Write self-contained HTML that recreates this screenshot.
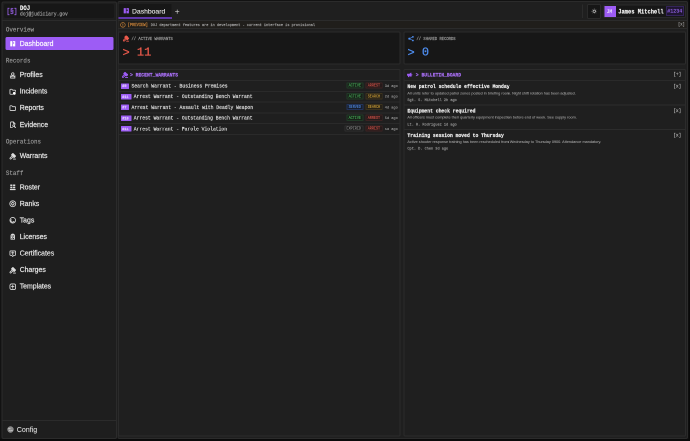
<!DOCTYPE html>
<html><head><meta charset="utf-8">
<style>
html,body{margin:0;padding:0;width:690px;height:441px;overflow:hidden;background:#0b0b0b;}
#r{will-change:transform;position:absolute;left:0;top:0;width:1380px;height:882px;transform:scale(.5);transform-origin:0 0;background:#121212;overflow:hidden;}
.t{position:absolute;white-space:nowrap;line-height:1;}
.box{position:absolute;box-sizing:border-box;}
svg{position:absolute;overflow:visible;}
</style></head><body><div id="r">
<div class="box" style="left:1377.00px;top:0.00px;width:3.00px;height:882.00px;background:#0a0a0a;border-radius:0.00px;"></div>
<div class="box" style="left:0.00px;top:878.40px;width:1380.00px;height:3.60px;background:#0a0a0a;border-radius:0.00px;"></div>
<div class="box" style="left:2.60px;top:2.60px;width:231.40px;height:875.20px;background:#1e1e1e;border:2px solid #2b2b2b;border-radius:4.00px;"></div>
<div class="box" style="left:8.00px;top:8.00px;width:220.40px;height:28.40px;background:#171717;border-radius:3.00px;"></div>
<div class="t" style="left:12.80px;top:17.61px;font-size:12.80px;font-family:'Liberation Mono',monospace;color:#a467f7;transform-origin:0 5.59px;transform:scaleY(1.1);letter-spacing:-0.5px;-webkit-text-stroke:0.4px currentColor;">[§]</div>
<div class="t" style="left:40.00px;top:12.31px;font-size:11.20px;font-family:'Liberation Mono',monospace;color:#f2f2f2;font-weight:bold;transform-origin:0 4.89px;transform:scaleY(1.1);-webkit-text-stroke:0.3px currentColor;">DOJ</div>
<div class="t" style="left:40.00px;top:24.09px;font-size:9.40px;font-family:'Liberation Mono',monospace;color:#9a9a9a;transform-origin:0 4.11px;transform:scaleY(1.1);-webkit-text-stroke:0.4px currentColor;">doj@judiciary.gov</div>
<div class="box" style="left:2.60px;top:40.00px;width:231.40px;height:2.00px;background:#2b2b2b;border-radius:0.00px;"></div>
<div class="t" style="left:11.80px;top:54.89px;font-size:11.70px;font-family:'Liberation Mono',monospace;color:#9a9a9a;transform-origin:0 5.11px;transform:scaleY(1.1);-webkit-text-stroke:0.3px currentColor;">Overview</div>
<div class="box" style="left:11.40px;top:73.60px;width:215.80px;height:26.60px;background:#9d5cf5;border-radius:3.00px;"></div>
<div class="t" style="left:39.40px;top:80.66px;font-size:13.80px;font-family:'Liberation Sans',sans-serif;color:#fbf7ff;-webkit-text-stroke:0.4px currentColor;">Dashboard</div>
<svg style="left:17.80px;top:79.50px" width="15.00" height="15.00" viewBox="0 0 24 24"><g fill="#fff"><rect x="4" y="3.5" width="6.5" height="17" rx="1"/><rect x="12.5" y="3.5" width="7.5" height="17" rx="1"/></g><rect x="12.5" y="7.5" width="4" height="4" fill="#9d5cf5"/></svg>
<div class="t" style="left:11.80px;top:116.69px;font-size:11.70px;font-family:'Liberation Mono',monospace;color:#9a9a9a;transform-origin:0 5.11px;transform:scaleY(1.1);-webkit-text-stroke:0.3px currentColor;">Records</div>
<div class="t" style="left:39.40px;top:143.06px;font-size:13.80px;font-family:'Liberation Sans',sans-serif;color:#e4e4e4;-webkit-text-stroke:0.4px currentColor;">Profiles</div>
<svg style="left:17.80px;top:142.50px" width="15.00" height="15.00" viewBox="0 0 24 24"><g color="#dcdcdc" fill="none" stroke="#dcdcdc" stroke-width="2.6" stroke-linecap="round" stroke-linejoin="round"><circle cx="12" cy="8" r="4"/><path d="M5 21v-1.5A4.5 4.5 0 0 1 9.5 15h5a4.5 4.5 0 0 1 4.5 4.5V21z"/><path d="M4 14.5h16"/></g></svg>
<div class="t" style="left:39.40px;top:176.26px;font-size:13.80px;font-family:'Liberation Sans',sans-serif;color:#e4e4e4;-webkit-text-stroke:0.4px currentColor;">Incidents</div>
<svg style="left:17.80px;top:175.70px" width="15.00" height="15.00" viewBox="0 0 24 24"><g color="#dcdcdc" fill="none" stroke="#dcdcdc" stroke-width="2.6" stroke-linecap="round" stroke-linejoin="round"><path d="M12 20H5a2 2 0 0 1-2-2V6a2 2 0 0 1 2-2h4l3 3h7a2 2 0 0 1 2 2v2"/></g><circle cx="17" cy="17" r="4.5" fill="#fff"/></svg>
<div class="t" style="left:39.40px;top:209.46px;font-size:13.80px;font-family:'Liberation Sans',sans-serif;color:#e4e4e4;-webkit-text-stroke:0.4px currentColor;">Reports</div>
<svg style="left:17.80px;top:208.90px" width="15.00" height="15.00" viewBox="0 0 24 24"><g color="#dcdcdc" fill="none" stroke="#dcdcdc" stroke-width="2.6" stroke-linecap="round" stroke-linejoin="round"><path d="M5 4h4l3 3h7a2 2 0 0 1 2 2v8a2 2 0 0 1-2 2H5a2 2 0 0 1-2-2V6a2 2 0 0 1 2-2"/></g></svg>
<div class="t" style="left:39.40px;top:242.66px;font-size:13.80px;font-family:'Liberation Sans',sans-serif;color:#e4e4e4;-webkit-text-stroke:0.4px currentColor;">Evidence</div>
<svg style="left:17.80px;top:242.10px" width="15.00" height="15.00" viewBox="0 0 24 24"><g color="#dcdcdc" fill="none" stroke="#dcdcdc" stroke-width="2.6" stroke-linecap="round" stroke-linejoin="round"><path d="M14 3v4a1 1 0 0 0 1 1h4"/><path d="M11 21H7a2 2 0 0 1-2-2V5a2 2 0 0 1 2-2h7l5 5v3"/><circle cx="15" cy="15" r="3"/><path d="M17.5 17.5L21 21"/></g></svg>
<div class="t" style="left:11.80px;top:278.89px;font-size:11.70px;font-family:'Liberation Mono',monospace;color:#9a9a9a;transform-origin:0 5.11px;transform:scaleY(1.1);-webkit-text-stroke:0.3px currentColor;">Operations</div>
<div class="t" style="left:39.40px;top:305.26px;font-size:13.80px;font-family:'Liberation Sans',sans-serif;color:#e4e4e4;-webkit-text-stroke:0.4px currentColor;">Warrants</div>
<svg style="left:17.80px;top:304.70px" width="15.00" height="15.00" viewBox="0 0 24 24"><g color="#dcdcdc" fill="none" stroke="#dcdcdc" stroke-width="2.6" stroke-linecap="round" stroke-linejoin="round"><g transform="translate(24 0) scale(-1 1)"><path d="M13 10l7.4 7.4a2.1 2.1 0 0 1-3 3L10 13"/><path d="M3 21h7"/><path d="M6.8 15.8L3.2 12.2a1 1 0 0 1 0-1.4l7.6-7.6a1 1 0 0 1 1.4 0l3.6 3.6a1 1 0 0 1 0 1.4l-7.6 7.6a1 1 0 0 1-1.4 0z" fill="currentColor"/></g></g></svg>
<div class="t" style="left:11.80px;top:341.89px;font-size:11.70px;font-family:'Liberation Mono',monospace;color:#9a9a9a;transform-origin:0 5.11px;transform:scaleY(1.1);-webkit-text-stroke:0.3px currentColor;">Staff</div>
<div class="t" style="left:39.40px;top:367.86px;font-size:13.80px;font-family:'Liberation Sans',sans-serif;color:#e4e4e4;-webkit-text-stroke:0.4px currentColor;">Roster</div>
<svg style="left:17.80px;top:367.30px" width="15.00" height="15.00" viewBox="0 0 24 24"><g fill="#dcdcdc"><rect x="4" y="3" width="7" height="5" rx="1"/><rect x="13" y="3" width="7" height="5" rx="1"/><rect x="4" y="10" width="7" height="5" rx="1"/><rect x="13" y="10" width="7" height="5" rx="1"/><rect x="3" y="17" width="18" height="4" rx="1"/></g></svg>
<div class="t" style="left:39.40px;top:400.92px;font-size:13.80px;font-family:'Liberation Sans',sans-serif;color:#e4e4e4;-webkit-text-stroke:0.4px currentColor;">Ranks</div>
<svg style="left:17.80px;top:400.36px" width="15.00" height="15.00" viewBox="0 0 24 24"><g color="#dcdcdc" fill="none" stroke="#dcdcdc" stroke-width="2.6" stroke-linecap="round" stroke-linejoin="round"><circle cx="12" cy="12" r="9.5"/><path d="M12 7l5 5-5 5-5-5z"/></g></svg>
<div class="t" style="left:39.40px;top:433.98px;font-size:13.80px;font-family:'Liberation Sans',sans-serif;color:#e4e4e4;-webkit-text-stroke:0.4px currentColor;">Tags</div>
<svg style="left:17.80px;top:433.42px" width="15.00" height="15.00" viewBox="0 0 24 24"><g color="#dcdcdc" fill="none" stroke="#dcdcdc" stroke-width="2.6" stroke-linecap="round" stroke-linejoin="round"><circle cx="12" cy="12" r="9"/><path d="M7 10a5 5 0 0 0 8 6l2 2"/></g></svg>
<div class="t" style="left:39.40px;top:467.04px;font-size:13.80px;font-family:'Liberation Sans',sans-serif;color:#e4e4e4;-webkit-text-stroke:0.4px currentColor;">Licenses</div>
<svg style="left:17.80px;top:466.48px" width="15.00" height="15.00" viewBox="0 0 24 24"><g fill="#dcdcdc"><path d="M12 2a7 7 0 0 1 7 7v12H5V9a7 7 0 0 1 7-7z"/></g><g fill="#1e1e1e"><rect x="8" y="8" width="3" height="3"/><rect x="13" y="8" width="3" height="3"/><rect x="10.5" y="12" width="3" height="3"/><rect x="8" y="16" width="3" height="3"/><rect x="13" y="16" width="3" height="3"/></g></svg>
<div class="t" style="left:39.40px;top:500.10px;font-size:13.80px;font-family:'Liberation Sans',sans-serif;color:#e4e4e4;-webkit-text-stroke:0.4px currentColor;">Certificates</div>
<svg style="left:17.80px;top:499.54px" width="15.00" height="15.00" viewBox="0 0 24 24"><g color="#dcdcdc" fill="none" stroke="#dcdcdc" stroke-width="2.6" stroke-linecap="round" stroke-linejoin="round"><path d="M5 3h14a2 2 0 0 1 2 2v10a2 2 0 0 1-2 2h-4l-3 4-3-4H5a2 2 0 0 1-2-2V5a2 2 0 0 1 2-2z"/><path d="M8 9h8M12 6v8"/></g></svg>
<div class="t" style="left:39.40px;top:533.16px;font-size:13.80px;font-family:'Liberation Sans',sans-serif;color:#e4e4e4;-webkit-text-stroke:0.4px currentColor;">Charges</div>
<svg style="left:17.80px;top:532.60px" width="15.00" height="15.00" viewBox="0 0 24 24"><g color="#dcdcdc" fill="none" stroke="#dcdcdc" stroke-width="2.6" stroke-linecap="round" stroke-linejoin="round"><g transform="translate(24 0) scale(-1 1)"><path d="M13 10l7.4 7.4a2.1 2.1 0 0 1-3 3L10 13"/><path d="M3 21h7"/><path d="M6.8 15.8L3.2 12.2a1 1 0 0 1 0-1.4l7.6-7.6a1 1 0 0 1 1.4 0l3.6 3.6a1 1 0 0 1 0 1.4l-7.6 7.6a1 1 0 0 1-1.4 0z" fill="currentColor"/></g></g></svg>
<div class="t" style="left:39.40px;top:566.22px;font-size:13.80px;font-family:'Liberation Sans',sans-serif;color:#e4e4e4;-webkit-text-stroke:0.4px currentColor;">Templates</div>
<svg style="left:17.80px;top:565.66px" width="15.00" height="15.00" viewBox="0 0 24 24"><g color="#dcdcdc" fill="none" stroke="#dcdcdc" stroke-width="2.6" stroke-linecap="round" stroke-linejoin="round"><rect x="3" y="3" width="18" height="18" rx="5"/><path d="M8 11h8M12 7v10"/></g></svg>
<div class="box" style="left:2.60px;top:840.00px;width:231.40px;height:2.00px;background:#2b2b2b;border-radius:0.00px;"></div>
<div class="t" style="left:33.40px;top:851.86px;font-size:14.20px;font-family:'Liberation Sans',sans-serif;color:#d6d6d6;-webkit-text-stroke:0.25px currentColor;">Config</div>
<svg style="left:14.00px;top:852.00px" width="14.00" height="14.00" viewBox="0 0 24 24"><circle cx="12" cy="12" r="11" fill="#8a8a8a"/><path d="M5 9h6M13 15h6M8 14l3 3" stroke="#c8c8c8" stroke-width="2.5" stroke-linecap="round"/></svg>
<div class="box" style="left:235.20px;top:2.00px;width:1141.20px;height:875.80px;background:#1f1f1f;border:2px solid #2b2b2b;border-radius:4.00px;"></div>
<div class="box" style="left:235.20px;top:39.80px;width:1141.20px;height:2.00px;background:#2b2b2b;border-radius:0.00px;"></div>
<div class="box" style="left:237.20px;top:8.00px;width:106.00px;height:26.60px;background:#171717;border-radius:0.00px;"></div>
<div class="box" style="left:237.20px;top:33.80px;width:106.40px;height:3.80px;background:#6038aa;border-radius:0.00px;"></div>
<svg style="left:245.60px;top:15.20px" width="13.20" height="13.20" viewBox="0 0 24 24"><g fill="#9d5cf5"><rect x="2.5" y="2.5" width="8" height="19" rx="1"/><rect x="12.5" y="2.5" width="9" height="19" rx="1"/></g><rect x="12.5" y="8" width="4" height="3.5" fill="#171717"/></svg>
<div class="t" style="left:264.00px;top:15.56px;font-size:13.60px;font-family:'Liberation Sans',sans-serif;color:#e4e4e4;-webkit-text-stroke:0.25px currentColor;">Dashboard</div>
<svg style="left:349.60px;top:18.80px" width="8.80" height="8.80" viewBox="0 0 24 24"><path d="M12 2v20M2 12h20" stroke="#d0d0d0" stroke-width="3.5" stroke-linecap="round"/></svg>
<div class="box" style="left:1164.20px;top:8.60px;width:1.80px;height:27.00px;background:#2b2b2b;border-radius:0.00px;"></div>
<div class="box" style="left:1173.80px;top:8.20px;width:28.00px;height:29.40px;background:#161616;border:2px solid #2a2a2a;border-radius:3.00px;"></div>
<svg style="left:1181.60px;top:16.00px" width="12.80" height="12.80" viewBox="0 0 24 24"><g fill="none" stroke="#d4d4d4" stroke-width="2.6" stroke-linecap="round"><circle cx="12" cy="12" r="4.6"/></g><g fill="#9a9a9a"><circle cx="12" cy="2.5" r="1.2"/><circle cx="12" cy="21.5" r="1.2"/><circle cx="2.5" cy="12" r="1.2"/><circle cx="21.5" cy="12" r="1.2"/><circle cx="5.3" cy="5.3" r="1.2"/><circle cx="18.7" cy="18.7" r="1.2"/><circle cx="5.3" cy="18.7" r="1.2"/><circle cx="18.7" cy="5.3" r="1.2"/></g></svg>
<div class="box" style="left:1206.80px;top:8.60px;width:165.00px;height:27.80px;background:#171717;border:2px solid #2a2a2a;border-radius:3.00px;"></div>
<div class="box" style="left:1209.40px;top:12.00px;width:22.60px;height:22.00px;background:#9d5cf5;border-radius:0.00px;"></div>
<div class="t" style="left:1213.20px;top:18.78px;font-size:9.20px;font-family:'Liberation Mono',monospace;color:#eadcff;transform-origin:0 4.02px;transform:scaleY(1.1);-webkit-text-stroke:0.3px currentColor;">JM</div>
<div class="t" style="left:1236.60px;top:18.88px;font-size:10.80px;font-family:'Liberation Mono',monospace;color:#f0f0f0;font-weight:bold;transform-origin:0 4.72px;transform:scaleY(1.1);-webkit-text-stroke:0.3px currentColor;">James Mitchell</div>
<div class="box" style="left:1332.00px;top:12.20px;width:36.20px;height:19.80px;background:#1f1630;border:2px solid #34245a;border-radius:1.00px;"></div>
<div class="t" style="left:1334.40px;top:18.03px;font-size:10.00px;font-family:'Liberation Mono',monospace;color:#9563ea;transform-origin:0 4.37px;transform:scaleY(1.1);-webkit-text-stroke:0.3px currentColor;">#1234</div>
<div class="box" style="left:237.20px;top:41.80px;width:1135.60px;height:14.00px;background:#201e1b;border-radius:0.00px;"></div>
<div class="box" style="left:235.20px;top:55.80px;width:1141.20px;height:2.00px;background:#2b2b2b;border-radius:0.00px;"></div>
<svg style="left:240.00px;top:44.00px" width="11.60" height="11.60" viewBox="0 0 24 24"><g fill="none" stroke="#d2883a" stroke-width="2.6" stroke-linecap="round"><circle cx="12" cy="12" r="9.5"/><path d="M12 7v6M12 16.5v.5"/></g></svg>
<div class="t" style="left:255.20px;top:46.72px;font-size:7.50px;font-family:'Liberation Mono',monospace;color:#d2883a;transform-origin:0 3.28px;transform:scaleY(1.1);-webkit-text-stroke:0.3px currentColor;">[PREVIEW]</div>
<div class="t" style="left:301.60px;top:46.89px;font-size:7.12px;font-family:'Liberation Mono',monospace;color:#a0a0a0;transform-origin:0 3.11px;transform:scaleY(1.1);-webkit-text-stroke:0.3px currentColor;">DOJ department features are in development - current interface is provisional</div>
<div class="t" style="left:1356.00px;top:46.08px;font-size:7.60px;font-family:'Liberation Mono',monospace;color:#9a9a9a;transform-origin:0 3.32px;transform:scaleY(1.1);-webkit-text-stroke:0.3px currentColor;">[x]</div>
<div class="box" style="left:236.40px;top:63.00px;width:564.80px;height:66.40px;background:#171717;border:2px solid #2b2b2b;border-radius:3.00px;"></div>
<div class="box" style="left:806.80px;top:63.00px;width:565.60px;height:66.40px;background:#171717;border:2px solid #2b2b2b;border-radius:3.00px;"></div>
<svg style="left:245.20px;top:70.40px" width="14.00" height="14.00" viewBox="0 0 24 24"><g fill="none" stroke="#ec5a4c" color="#ec5a4c" stroke-width="3" stroke-linecap="round" stroke-linejoin="round"><g transform="translate(24 0) scale(-1 1)"><path d="M13 10l7.4 7.4a2.1 2.1 0 0 1-3 3L10 13"/><path d="M3 21h7"/><path d="M6.8 15.8L3.2 12.2a1 1 0 0 1 0-1.4l7.6-7.6a1 1 0 0 1 1.4 0l3.6 3.6a1 1 0 0 1 0 1.4l-7.6 7.6a1 1 0 0 1-1.4 0z" fill="currentColor"/></g></g></svg>
<div class="t" style="left:263.00px;top:74.65px;font-size:7.66px;font-family:'Liberation Mono',monospace;color:#a0a0a0;transform-origin:0 3.35px;transform:scaleY(1.1);-webkit-text-stroke:0.3px currentColor;">// ACTIVE WARRANTS</div>
<div class="t" style="left:245.00px;top:94.11px;font-size:24.00px;font-family:'Liberation Mono',monospace;color:#ec5a4c;-webkit-text-stroke:0.5px currentColor;transform:scaleY(0.98);">&gt;</div>
<div class="t" style="left:245.00px;top:92.91px;font-size:24.00px;font-family:'Liberation Mono',monospace;color:#ec5a4c;-webkit-text-stroke:0.5px currentColor;transform:scaleY(0.98);">&nbsp;&nbsp;11</div>
<svg style="left:815.60px;top:71.00px" width="12.40" height="12.80" viewBox="0 0 24 24"><g fill="#4f8ff2"><circle cx="5" cy="12" r="4"/><circle cx="19" cy="5" r="3.5"/><circle cx="19" cy="19" r="3.5"/></g><path d="M5 12L19 5M5 12l14 7" stroke="#4f8ff2" stroke-width="2.5"/></svg>
<div class="t" style="left:833.00px;top:74.65px;font-size:7.66px;font-family:'Liberation Mono',monospace;color:#a0a0a0;transform-origin:0 3.35px;transform:scaleY(1.1);-webkit-text-stroke:0.3px currentColor;">// SHARED RECORDS</div>
<div class="t" style="left:815.00px;top:94.11px;font-size:24.00px;font-family:'Liberation Mono',monospace;color:#4f8ff2;-webkit-text-stroke:0.5px currentColor;transform:scaleY(0.98);">&gt;</div>
<div class="t" style="left:815.00px;top:92.91px;font-size:24.00px;font-family:'Liberation Mono',monospace;color:#4f8ff2;-webkit-text-stroke:0.5px currentColor;transform:scaleY(0.98);">&nbsp;&nbsp;0</div>
<div class="box" style="left:236.40px;top:137.60px;width:564.80px;height:735.80px;background:#1f1f1f;border:2px solid #2b2b2b;border-radius:3.00px;"></div>
<div class="box" style="left:237.40px;top:160.00px;width:562.80px;height:2.00px;background:#2a2a2a;border-radius:0.00px;"></div>
<div class="box" style="left:806.80px;top:137.60px;width:565.60px;height:735.80px;background:#1f1f1f;border:2px solid #2b2b2b;border-radius:3.00px;"></div>
<div class="box" style="left:807.80px;top:160.00px;width:563.60px;height:2.00px;background:#2a2a2a;border-radius:0.00px;"></div>
<svg style="left:243.00px;top:143.00px" width="13.60" height="13.60" viewBox="0 0 24 24"><g fill="none" stroke="#9d5cf5" color="#9d5cf5" stroke-width="3" stroke-linecap="round" stroke-linejoin="round"><g transform="translate(24 0) scale(-1 1)"><path d="M13 10l7.4 7.4a2.1 2.1 0 0 1-3 3L10 13"/><path d="M3 21h7"/><path d="M6.8 15.8L3.2 12.2a1 1 0 0 1 0-1.4l7.6-7.6a1 1 0 0 1 1.4 0l3.6 3.6a1 1 0 0 1 0 1.4l-7.6 7.6a1 1 0 0 1-1.4 0z" fill="currentColor"/></g></g></svg>
<div class="t" style="left:260.00px;top:145.87px;font-size:9.44px;font-family:'Liberation Mono',monospace;color:#aa70f7;font-weight:bold;transform-origin:0 4.13px;transform:scaleY(1.1);-webkit-text-stroke:0.3px currentColor;">&gt; RECENT_WARRANTS</div>
<svg style="left:813.00px;top:144.00px" width="12.40" height="12.00" viewBox="0 0 24 24"><g fill="#9d5cf5" stroke="#9d5cf5" stroke-width="2.2" stroke-linejoin="round" stroke-linecap="round"><path d="M3 8h9l6-4.5v15L12 14H3z"/><path d="M7 14h3v5.5H7z"/><path d="M20.5 8.5a3 3 0 0 1 0 5" fill="none"/></g></svg>
<div class="t" style="left:831.60px;top:145.87px;font-size:9.44px;font-family:'Liberation Mono',monospace;color:#aa70f7;font-weight:bold;transform-origin:0 4.13px;transform:scaleY(1.1);-webkit-text-stroke:0.3px currentColor;">&gt; BULLETIN_BOARD</div>
<div class="t" style="left:1346.40px;top:145.47px;font-size:9.00px;font-family:'Liberation Mono',monospace;color:#b4b4b4;transform-origin:0 3.93px;transform:scaleY(1.1);-webkit-text-stroke:0.3px currentColor;">[+]</div>
<div class="box" style="left:237.40px;top:181.80px;width:562.80px;height:2.00px;background:#2a2a2a;border-radius:0.00px;"></div>
<div class="box" style="left:242.00px;top:166.50px;width:16.00px;height:11.00px;background:#9d5cf5;border-radius:0.80px;"></div>
<div class="t" style="left:244.60px;top:169.24px;font-size:7.00px;font-family:'Liberation Mono',monospace;color:#e4d0ff;font-weight:bold;transform-origin:0 3.06px;transform:scaleY(1.1);-webkit-text-stroke:0.3px currentColor;">#9</div>
<div class="t" style="left:263.00px;top:167.97px;font-size:9.44px;font-family:'Liberation Mono',monospace;color:#e2e2e2;transform-origin:0 4.13px;transform:scaleY(1.1);-webkit-text-stroke:0.3px currentColor;">Search Warrant - Business Premises</div>
<div class="box" style="left:692.80px;top:164.90px;width:34.00px;height:12.60px;background:#182219;border:2px solid #213a26;border-radius:1.20px;"></div>
<div class="t" style="left:697.20px;top:168.18px;font-size:6.90px;font-family:'Liberation Mono',monospace;color:#4cbb5e;-webkit-text-stroke:0.1px currentColor;transform-origin:0 44%;transform:scaleY(1.22);">ACTIVE</div>
<div class="box" style="left:731.00px;top:164.90px;width:34.00px;height:12.60px;background:#261a1a;border:2px solid #3d2222;border-radius:1.20px;"></div>
<div class="t" style="left:735.40px;top:168.18px;font-size:6.90px;font-family:'Liberation Mono',monospace;color:#e5584d;-webkit-text-stroke:0.1px currentColor;transform-origin:0 44%;transform:scaleY(1.22);">ARREST</div>
<div class="t" style="left:769.60px;top:168.95px;font-size:7.20px;font-family:'Liberation Mono',monospace;color:#a8a8a8;transform-origin:0 3.15px;transform:scaleY(1.1);-webkit-text-stroke:0.1px currentColor;">3d ago</div>
<div class="box" style="left:237.40px;top:203.26px;width:562.80px;height:2.00px;background:#2a2a2a;border-radius:0.00px;"></div>
<div class="box" style="left:242.00px;top:187.96px;width:20.60px;height:11.00px;background:#9d5cf5;border-radius:0.80px;"></div>
<div class="t" style="left:244.60px;top:190.70px;font-size:7.00px;font-family:'Liberation Mono',monospace;color:#e4d0ff;font-weight:bold;transform-origin:0 3.06px;transform:scaleY(1.1);-webkit-text-stroke:0.3px currentColor;">#11</div>
<div class="t" style="left:267.60px;top:189.43px;font-size:9.44px;font-family:'Liberation Mono',monospace;color:#e2e2e2;transform-origin:0 4.13px;transform:scaleY(1.1);-webkit-text-stroke:0.3px currentColor;">Arrest Warrant - Outstanding Bench Warrant</div>
<div class="box" style="left:692.80px;top:186.36px;width:34.00px;height:12.60px;background:#182219;border:2px solid #213a26;border-radius:1.20px;"></div>
<div class="t" style="left:697.20px;top:189.64px;font-size:6.90px;font-family:'Liberation Mono',monospace;color:#4cbb5e;-webkit-text-stroke:0.1px currentColor;transform-origin:0 44%;transform:scaleY(1.22);">ACTIVE</div>
<div class="box" style="left:731.00px;top:186.36px;width:34.00px;height:12.60px;background:#262117;border:2px solid #3d331d;border-radius:1.20px;"></div>
<div class="t" style="left:735.40px;top:189.64px;font-size:6.90px;font-family:'Liberation Mono',monospace;color:#d8a83a;-webkit-text-stroke:0.1px currentColor;transform-origin:0 44%;transform:scaleY(1.22);">SEARCH</div>
<div class="t" style="left:769.60px;top:190.41px;font-size:7.20px;font-family:'Liberation Mono',monospace;color:#a8a8a8;transform-origin:0 3.15px;transform:scaleY(1.1);-webkit-text-stroke:0.1px currentColor;">2d ago</div>
<div class="box" style="left:237.40px;top:224.72px;width:562.80px;height:2.00px;background:#2a2a2a;border-radius:0.00px;"></div>
<div class="box" style="left:242.00px;top:209.42px;width:16.00px;height:11.00px;background:#9d5cf5;border-radius:0.80px;"></div>
<div class="t" style="left:244.60px;top:212.16px;font-size:7.00px;font-family:'Liberation Mono',monospace;color:#e4d0ff;font-weight:bold;transform-origin:0 3.06px;transform:scaleY(1.1);-webkit-text-stroke:0.3px currentColor;">#7</div>
<div class="t" style="left:263.00px;top:210.89px;font-size:9.44px;font-family:'Liberation Mono',monospace;color:#e2e2e2;transform-origin:0 4.13px;transform:scaleY(1.1);-webkit-text-stroke:0.3px currentColor;">Arrest Warrant - Assault with Deadly Weapon</div>
<div class="box" style="left:692.80px;top:207.82px;width:34.00px;height:12.60px;background:#181e2b;border:2px solid #22335a;border-radius:1.20px;"></div>
<div class="t" style="left:697.20px;top:211.10px;font-size:6.90px;font-family:'Liberation Mono',monospace;color:#5594f5;-webkit-text-stroke:0.1px currentColor;transform-origin:0 44%;transform:scaleY(1.22);">SERVED</div>
<div class="box" style="left:731.00px;top:207.82px;width:34.00px;height:12.60px;background:#262117;border:2px solid #3d331d;border-radius:1.20px;"></div>
<div class="t" style="left:735.40px;top:211.10px;font-size:6.90px;font-family:'Liberation Mono',monospace;color:#d8a83a;-webkit-text-stroke:0.1px currentColor;transform-origin:0 44%;transform:scaleY(1.22);">SEARCH</div>
<div class="t" style="left:769.60px;top:211.87px;font-size:7.20px;font-family:'Liberation Mono',monospace;color:#a8a8a8;transform-origin:0 3.15px;transform:scaleY(1.1);-webkit-text-stroke:0.1px currentColor;">4d ago</div>
<div class="box" style="left:237.40px;top:246.18px;width:562.80px;height:2.00px;background:#2a2a2a;border-radius:0.00px;"></div>
<div class="box" style="left:242.00px;top:230.88px;width:20.60px;height:11.00px;background:#9d5cf5;border-radius:0.80px;"></div>
<div class="t" style="left:244.60px;top:233.62px;font-size:7.00px;font-family:'Liberation Mono',monospace;color:#e4d0ff;font-weight:bold;transform-origin:0 3.06px;transform:scaleY(1.1);-webkit-text-stroke:0.3px currentColor;">#10</div>
<div class="t" style="left:267.60px;top:232.35px;font-size:9.44px;font-family:'Liberation Mono',monospace;color:#e2e2e2;transform-origin:0 4.13px;transform:scaleY(1.1);-webkit-text-stroke:0.3px currentColor;">Arrest Warrant - Outstanding Bench Warrant</div>
<div class="box" style="left:692.80px;top:229.28px;width:34.00px;height:12.60px;background:#182219;border:2px solid #213a26;border-radius:1.20px;"></div>
<div class="t" style="left:697.20px;top:232.56px;font-size:6.90px;font-family:'Liberation Mono',monospace;color:#4cbb5e;-webkit-text-stroke:0.1px currentColor;transform-origin:0 44%;transform:scaleY(1.22);">ACTIVE</div>
<div class="box" style="left:731.00px;top:229.28px;width:34.00px;height:12.60px;background:#261a1a;border:2px solid #3d2222;border-radius:1.20px;"></div>
<div class="t" style="left:735.40px;top:232.56px;font-size:6.90px;font-family:'Liberation Mono',monospace;color:#e5584d;-webkit-text-stroke:0.1px currentColor;transform-origin:0 44%;transform:scaleY(1.22);">ARREST</div>
<div class="t" style="left:769.60px;top:233.33px;font-size:7.20px;font-family:'Liberation Mono',monospace;color:#a8a8a8;transform-origin:0 3.15px;transform:scaleY(1.1);-webkit-text-stroke:0.1px currentColor;">5d ago</div>
<div class="box" style="left:237.40px;top:267.64px;width:562.80px;height:2.00px;background:#2a2a2a;border-radius:0.00px;"></div>
<div class="box" style="left:242.00px;top:252.34px;width:20.60px;height:11.00px;background:#9d5cf5;border-radius:0.80px;"></div>
<div class="t" style="left:244.60px;top:255.08px;font-size:7.00px;font-family:'Liberation Mono',monospace;color:#e4d0ff;font-weight:bold;transform-origin:0 3.06px;transform:scaleY(1.1);-webkit-text-stroke:0.3px currentColor;">#11</div>
<div class="t" style="left:267.60px;top:253.81px;font-size:9.44px;font-family:'Liberation Mono',monospace;color:#e2e2e2;transform-origin:0 4.13px;transform:scaleY(1.1);-webkit-text-stroke:0.3px currentColor;">Arrest Warrant - Parole Violation</div>
<div class="box" style="left:688.60px;top:250.74px;width:38.20px;height:12.60px;background:#1c1c1c;border:2px solid #2e2e2e;border-radius:1.20px;"></div>
<div class="t" style="left:693.00px;top:254.02px;font-size:6.90px;font-family:'Liberation Mono',monospace;color:#8f8f8f;-webkit-text-stroke:0.1px currentColor;transform-origin:0 44%;transform:scaleY(1.22);">EXPIRED</div>
<div class="box" style="left:731.00px;top:250.74px;width:34.00px;height:12.60px;background:#261a1a;border:2px solid #3d2222;border-radius:1.20px;"></div>
<div class="t" style="left:735.40px;top:254.02px;font-size:6.90px;font-family:'Liberation Mono',monospace;color:#e5584d;-webkit-text-stroke:0.1px currentColor;transform-origin:0 44%;transform:scaleY(1.22);">ARREST</div>
<div class="t" style="left:769.60px;top:254.79px;font-size:7.20px;font-family:'Liberation Mono',monospace;color:#a8a8a8;transform-origin:0 3.15px;transform:scaleY(1.1);-webkit-text-stroke:0.1px currentColor;">5d ago</div>
<div class="t" style="left:814.80px;top:169.07px;font-size:9.46px;font-family:'Liberation Mono',monospace;color:#f0f0f0;font-weight:bold;transform-origin:0 4.13px;transform:scaleY(1.1);-webkit-text-stroke:0.3px currentColor;">New patrol schedule effective Monday</div>
<div class="t" style="left:814.80px;top:182.58px;font-size:7.60px;font-family:'Liberation Sans',sans-serif;color:#a6a6a6;-webkit-text-stroke:0.1px currentColor;">All units refer to updated patrol zones posted in briefing room. Night shift rotation has been adjusted.</div>
<div class="t" style="left:814.80px;top:196.67px;font-size:7.16px;font-family:'Liberation Mono',monospace;color:#939393;transform-origin:0 3.13px;transform:scaleY(1.1);-webkit-text-stroke:0.3px currentColor;">Sgt. S. Mitchell 2h ago</div>
<div class="t" style="left:1346.40px;top:169.27px;font-size:9.00px;font-family:'Liberation Mono',monospace;color:#b4b4b4;transform-origin:0 3.93px;transform:scaleY(1.1);-webkit-text-stroke:0.3px currentColor;">[x]</div>
<div class="box" style="left:807.80px;top:209.00px;width:563.60px;height:1.80px;background:#2c2c2c;border-radius:0.00px;"></div>
<div class="t" style="left:814.80px;top:217.97px;font-size:9.46px;font-family:'Liberation Mono',monospace;color:#f0f0f0;font-weight:bold;transform-origin:0 4.13px;transform:scaleY(1.1);-webkit-text-stroke:0.3px currentColor;">Equipment check required</div>
<div class="t" style="left:814.80px;top:231.48px;font-size:7.60px;font-family:'Liberation Sans',sans-serif;color:#a6a6a6;-webkit-text-stroke:0.1px currentColor;">All officers must complete their quarterly equipment inspection before end of week. See supply room.</div>
<div class="t" style="left:814.80px;top:245.57px;font-size:7.16px;font-family:'Liberation Mono',monospace;color:#939393;transform-origin:0 3.13px;transform:scaleY(1.1);-webkit-text-stroke:0.3px currentColor;">Lt. R. Rodriguez 1d ago</div>
<div class="t" style="left:1346.40px;top:218.17px;font-size:9.00px;font-family:'Liberation Mono',monospace;color:#b4b4b4;transform-origin:0 3.93px;transform:scaleY(1.1);-webkit-text-stroke:0.3px currentColor;">[x]</div>
<div class="box" style="left:807.80px;top:257.90px;width:563.60px;height:1.80px;background:#2c2c2c;border-radius:0.00px;"></div>
<div class="t" style="left:814.80px;top:266.87px;font-size:9.46px;font-family:'Liberation Mono',monospace;color:#f0f0f0;font-weight:bold;transform-origin:0 4.13px;transform:scaleY(1.1);-webkit-text-stroke:0.3px currentColor;">Training session moved to Thursday</div>
<div class="t" style="left:814.80px;top:280.38px;font-size:7.60px;font-family:'Liberation Sans',sans-serif;color:#a6a6a6;-webkit-text-stroke:0.1px currentColor;">Active shooter response training has been rescheduled from Wednesday to Thursday 0900. Attendance mandatory.</div>
<div class="t" style="left:814.80px;top:294.47px;font-size:7.16px;font-family:'Liberation Mono',monospace;color:#939393;transform-origin:0 3.13px;transform:scaleY(1.1);-webkit-text-stroke:0.3px currentColor;">Cpt. D. Chen 3d ago</div>
<div class="t" style="left:1346.40px;top:267.07px;font-size:9.00px;font-family:'Liberation Mono',monospace;color:#b4b4b4;transform-origin:0 3.93px;transform:scaleY(1.1);-webkit-text-stroke:0.3px currentColor;">[x]</div>
</div></body></html>
